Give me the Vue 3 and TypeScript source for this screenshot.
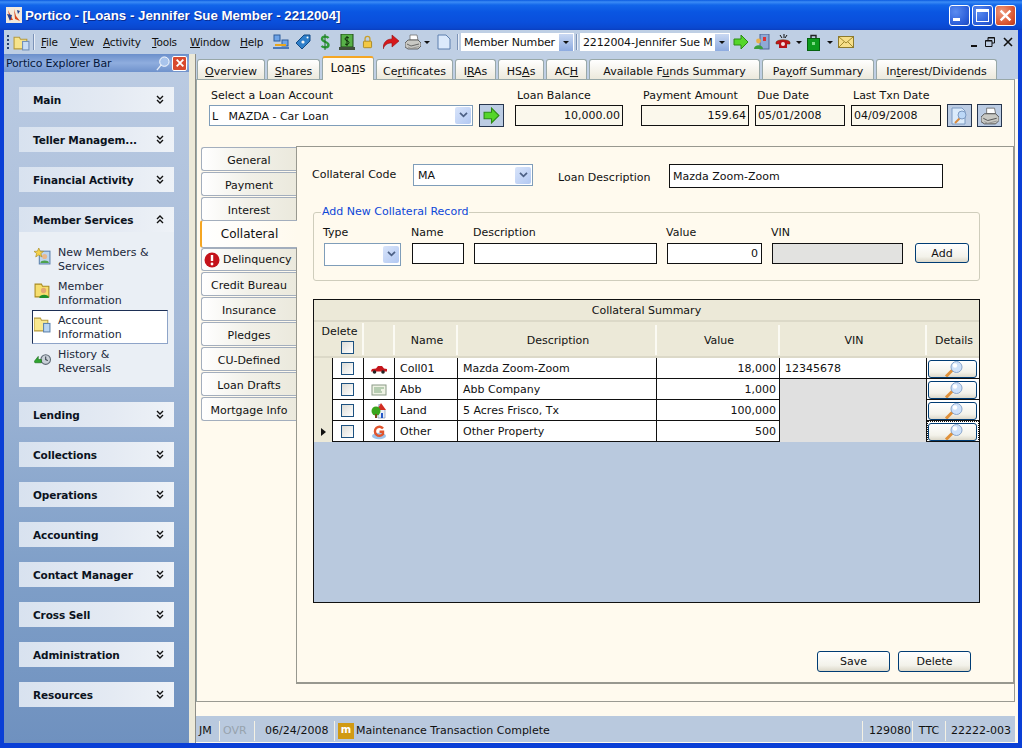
<script setup lang="ts">
type Mnemonic = { before: string; key: string; after: string };

// "&" marks the underlined access key, the way the WinForms labels do
function mnemonic(label: string): Mnemonic {
  const at = label.indexOf("&");
  return { before: label.slice(0, at), key: label.charAt(at + 1), after: label.slice(at + 2) };
}

const menus = ["&File", "&View", "&Activity", "&Tools", "&Window", "&Help"].map(mnemonic);

const topTabs = [
  { label: "&Overview", width: 68 },
  { label: "&Shares", width: 53 },
  { label: "Loa&ns", width: 52, active: true },
  { label: "Ce&rtificates", width: 77 },
  { label: "I&RAs", width: 41 },
  { label: "HS&As", width: 46 },
  { label: "AC&H", width: 41 },
  { label: "Available F&unds Summary", width: 171 },
  { label: "Pa&yoff Summary", width: 112 },
  { label: "In&terest/Dividends", width: 121 },
].map((t) => ({ ...t, text: mnemonic(t.label) }));

const sideTabs = [
  { label: "General" },
  { label: "Payment" },
  { label: "Interest" },
  { label: "Collateral", active: true },
  { label: "Delinquency", alert: true },
  { label: "Credit Bureau" },
  { label: "Insurance" },
  { label: "Pledges" },
  { label: "CU-Defined" },
  { label: "Loan Drafts" },
  { label: "Mortgage Info" },
];

const groupsBefore = ["Main", "Teller Managem...", "Financial Activity"];
const groupsAfter = ["Lending", "Collections", "Operations", "Accounting", "Contact Manager", "Cross Sell", "Administration", "Resources"];

const memberItems = [
  { icon: "#i-new", lines: ["New Members &", "Services"] },
  { icon: "#i-member", lines: ["Member", "Information"] },
  { icon: "#i-account", lines: ["Account", "Information"], active: true },
  { icon: "#i-history", lines: ["History &", "Reversals"] },
];

const rows = [
  { icon: "#i-car", name: "Coll01", description: "Mazda Zoom-Zoom", value: "18,000", vin: "12345678" },
  { icon: "#i-cert", name: "Abb", description: "Abb Company", value: "1,000", vin: "" },
  { icon: "#i-land", name: "Land", description: "5 Acres Frisco, Tx", value: "100,000", vin: "" },
  { icon: "#i-other", name: "Other", description: "Other Property", value: "500", vin: "", current: true },
];
</script>

<template>
  <div class="window">
    <svg class="defs" width="0" height="0">
      <defs>
        <symbol id="i-lens" viewBox="0 0 24 16">
          <path d="M5 15.500l7-7" stroke="#e0913a" stroke-width="3" />
          <circle cx="15.500" cy="6" r="5.500" fill="#cfe2fa" stroke="#8aa6cc" />
          <circle cx="14" cy="4.500" r="2.200" fill="#fff" />
        </symbol>
        <symbol id="i-go" viewBox="0 0 16 16">
          <path d="M1 5h7V1l7 7-7 7v-4H1z" fill="#55d62a" stroke="#2c8a14" />
        </symbol>
        <symbol id="i-folder" viewBox="0 0 16 16">
          <path d="M1 3h5l1 2h6v9H1z" fill="#f6e38c" stroke="#b79b3c" />
          <rect x="9" y="7" width="6" height="8" fill="#c7dcf5" stroke="#6f8fb8" />
        </symbol>
        <symbol id="i-new" viewBox="0 0 16 16">
          <rect x="5" y="3" width="10" height="12" fill="#bcd5ee" stroke="#5d83ad" />
          <circle cx="10" cy="8" r="2.400" fill="#e9b78c" />
          <path d="M6 14c0-3 8-3 8 0z" fill="#4da24d" />
          <path d="M4.500 0l1.300 3 3.200.2-2.500 2 .9 3.200-2.900-1.800L1.600 8.400l.9-3.200L0 3.200 3.200 3z" fill="#f5d24a" stroke="#a98a1d" stroke-width=".6" />
        </symbol>
        <symbol id="i-member" viewBox="0 0 16 16">
          <path d="M1 2h6l1 2h6v10H1z" fill="#f6de6e" stroke="#a98a1d" />
          <circle cx="9" cy="8" r="2.500" fill="#e3a772" />
          <path d="M5 15c0-4 9-4 9 0z" fill="#1f8f2a" />
        </symbol>
        <symbol id="i-account" viewBox="0 0 16 16">
          <path d="M0 2h6l1 2h6v10H0z" fill="#f9e88f" stroke="#b79b3c" />
          <rect x="9" y="7" width="6" height="8" fill="#b9d5f2" stroke="#5d83ad" />
        </symbol>
        <symbol id="i-history" viewBox="0 0 16 16">
          <circle cx="11" cy="9" r="4.500" fill="#c9d0d8" stroke="#5f6a75" />
          <path d="M11 6v3l2 1" stroke="#39424c" fill="none" />
          <path d="M0 11l4-5v3h3v3H1z" fill="#2fa52f" stroke="#1a6e1a" stroke-width=".6" />
        </symbol>
        <symbol id="i-car" viewBox="0 0 16 16">
          <path d="M0 10l1-2 4-.5L7 5h4l2 2.500 3 .5v2.500H0z" fill="#c4161c" />
          <circle cx="3.500" cy="11" r="1.800" fill="#222" />
          <circle cx="12" cy="11" r="1.800" fill="#222" />
        </symbol>
        <symbol id="i-cert" viewBox="0 0 16 16">
          <rect x="1" y="3" width="14" height="10" fill="#eef2e4" stroke="#8a9a86" />
          <path d="M3 6h10M3 8h7M3 10h8" stroke="#7fa77f" />
        </symbol>
        <symbol id="i-land" viewBox="0 0 16 16">
          <path d="M8 1l6 6v8H7V7z" fill="#e8eef8" stroke="#7f93b3" stroke-width=".7" />
          <path d="M10 0l5 7H6z" fill="#d22d22" />
          <rect x="10" y="10" width="2" height="5" fill="#2458c8" />
          <circle cx="5" cy="8" r="4.500" fill="#39a51c" />
          <rect x="4" y="11" width="2" height="4" fill="#7a4a1e" />
        </symbol>
        <symbol id="i-other" viewBox="0 0 16 16">
          <ellipse cx="8" cy="12" rx="7" ry="3.200" fill="#9cc3ea" />
          <path d="M12 4.500A4.500 4.500 0 1 0 12 10V7.800H8.500" fill="none" stroke="#e0552e" stroke-width="2.400" />
        </symbol>
        <symbol id="i-doc" viewBox="0 0 16 16">
          <path d="M2 1h8l4 4v10H2z" fill="#dbe9fb" stroke="#5d7fae" />
        </symbol>
        <symbol id="i-print" viewBox="0 0 16 16">
          <path d="M5 1h7l1 5H5z" fill="#fff" stroke="#6f6f6f" stroke-width=".8" />
          <path d="M0 9l3-3h10l3 3v3l-3 3H3l-3-2z" fill="#c9c9c4" stroke="#4c4c4c" stroke-width=".8" />
          <path d="M2 10l4 2 8-2" stroke="#4c4c4c" stroke-width=".8" fill="none" />
          <path d="M3 13l3 1.500 8-2" stroke="#8d8d8d" stroke-width=".8" fill="none" />
        </symbol>
        <symbol id="i-lock" viewBox="0 0 16 16">
          <path d="M5 7V4a3 3 0 0 1 6 0v3" fill="none" stroke="#c9a02c" stroke-width="1.600" />
          <rect x="3" y="7" width="10" height="8" rx="1" fill="#f3c844" stroke="#a27f14" />
        </symbol>
      </defs>
    </svg>

    <header class="titlebar">
      <svg class="app-logo" viewBox="0 0 16 16">
        <rect width="16" height="16" fill="#f2e9dc" />
        <path d="M2 3l5 10H4zM8 2l2 7 4 5-5-2z" fill="#d8461c" />
        <path d="M1 7l5 1-2 6zM11 3l3 1-2 3z" fill="#23408e" />
      </svg>
      <span class="title-text">Portico - [Loans - Jennifer Sue Member - 2212004]</span>
      <div class="caption-buttons">
        <button class="cap cap-blue"><i class="glyph-min"></i></button>
        <button class="cap cap-blue"><i class="glyph-max"></i></button>
        <button class="cap cap-red">
          <svg viewBox="0 0 12 12" width="13" height="13"><path d="M1.500 1.500l9 9m0-9l-9 9" stroke="#fff" stroke-width="2.200" /></svg>
        </button>
      </div>
    </header>

    <div class="toolbar">
      <span class="grip"></span>
      <svg class="tool tool-first"><use href="#i-folder" /></svg>
      <span class="sep"></span>
      <nav class="menus">
        <span v-for="m in menus" :key="m.key" class="menu">{{ m.before }}<u>{{ m.key }}</u>{{ m.after }}</span>
      </nav>
      <div class="tools">
        <svg class="tool" viewBox="0 0 16 16">
          <rect x="1" y="1" width="6" height="6" fill="#6ea4e8" stroke="#2d5c9c" /><rect x="9" y="6" width="6" height="6" fill="#6ea4e8" stroke="#2d5c9c" />
          <path d="M2 11h11" stroke="#e8a51c" stroke-width="2" /><rect y="13" width="16" height="2" fill="#4a78b8" />
        </svg>
        <svg class="tool" viewBox="0 0 16 16">
          <path d="M1 9l8-8h6v6l-8 8z" fill="#2f7fc9" stroke="#124a85" /><circle cx="8" cy="8" r="1.600" fill="#f4f4f4" /><circle cx="12.500" cy="3.500" r="1" fill="#fff" />
        </svg>
        <svg class="tool" viewBox="0 0 16 16">
          <path d="M11.500 4C10 2 5 2 5 5c0 3 6.500 2.500 6.500 6 0 3-5 3-7 1" fill="none" stroke="#2f9a36" stroke-width="2.400" /><path d="M8 0v16" stroke="#1c6a24" />
        </svg>
        <svg class="tool" viewBox="0 0 16 16">
          <rect x="2" y="0" width="12" height="13" fill="#58b148" stroke="#1d4a14" /><rect y="13" width="16" height="3" fill="#40503c" />
          <path d="M10 4C9 3 6 3 6 5s4 1.500 4 3.500S7 11 6 10M8 2v10" fill="none" stroke="#0d2c08" />
        </svg>
        <svg class="tool tool-narrow"><use href="#i-lock" /></svg>
        <svg class="tool tool-redo" viewBox="0 0 16 16">
          <path d="M0 15C0 8 4 5 9 5V1l7 6-7 6V9c-4 0-7 1-9 6z" fill="#d7181c" stroke="#8f1012" stroke-width=".6" />
        </svg>
        <svg class="tool"><use href="#i-print" /></svg>
        <i class="drop drop-tight"></i>
        <svg class="tool tool-doc"><use href="#i-doc" /></svg>
      </div>
      <span class="sep"></span>
      <div class="tool-combo combo-a"><span>Member Number</span><b class="combo-btn"><i class="drop"></i></b></div>
      <span class="sep"></span>
      <div class="tool-combo combo-b"><span>2212004-Jennifer Sue M</span><b class="combo-btn"><i class="drop"></i></b></div>
      <div class="tools tools-right">
        <svg class="tool"><use href="#i-go" /></svg>
        <svg class="tool" viewBox="0 0 16 16">
          <rect x="6" y="0" width="9" height="15" fill="#8fa9d6" stroke="#4f6796" /><path d="M9 3h3v4H9z" fill="#d33" />
          <circle cx="4.500" cy="7" r="2.400" fill="#e8b04a" /><path d="M0 15c0-5 9-5 9 0z" fill="#3b9f3b" />
        </svg>
        <svg class="tool" viewBox="0 0 16 16">
          <path d="M1 8c2-3 12-3 14 0v2H1z" fill="#c8141a" stroke="#530" stroke-width=".5" /><rect x="4" y="7" width="8" height="7" fill="#b81218" />
          <circle cx="8" cy="10" r="2" fill="#f2e2e2" /><path d="M5 1l2 3m2-4v4m3-3l-2 3" stroke="#111" />
        </svg>
        <i class="drop"></i>
        <svg class="tool-bag" viewBox="0 0 13 17">
          <path d="M4 5V1.500h5V5" fill="none" stroke="#222" stroke-width="1.400" /><rect x=".5" y="4.500" width="12" height="12" fill="#0d9b1e" stroke="#05620f" />
          <rect x="5" y="8" width="3" height="3" fill="#7ddc86" />
        </svg>
        <i class="drop drop-wide"></i>
        <svg class="tool-env" viewBox="0 0 16 12">
          <rect x=".5" y=".5" width="15" height="11" fill="#f6df8a" stroke="#8d7a2c" /><path d="M1 1l7 6 7-6M1 11l5-5m9 5l-5-5" stroke="#a18a2f" fill="none" />
        </svg>
      </div>
      <div class="mdi">
        <i class="mdi-min"></i>
        <svg viewBox="0 0 10 10" width="10" height="10"><path d="M3 3V.5h6.500V6H7M.5 3.500H7V9.500H.5z" fill="none" stroke="#111" /><path d="M3 1h6.500M.5 4H7" stroke="#111" /></svg>
        <svg viewBox="0 0 10 10" width="10" height="10"><path d="M1 1l8 8m0-8l-8 8" stroke="#111" stroke-width="1.600" /></svg>
      </div>
    </div>

    <div class="main">
      <aside class="explorer">
        <div class="explorer-head">
          <span>Portico Explorer Bar</span>
          <svg class="pin" viewBox="0 0 16 16"><path d="M2 15l5-6" stroke="#e8eef8" stroke-width="1.400" /><circle cx="10" cy="6" r="5" fill="#a9c4ec" stroke="#fff" /></svg>
          <span class="explorer-close"><svg viewBox="0 0 12 12" width="10" height="10"><path d="M2 2l8 8m0-8l-8 8" stroke="#fff" stroke-width="2.200" /></svg></span>
        </div>
        <div class="groups">
          <div v-for="g in groupsBefore" :key="g" class="group-head">
            <span>{{ g }}</span>
            <svg class="chev" viewBox="0 0 8 9"><path d="M1 1l3 3 3-3M1 5l3 3 3-3" fill="none" stroke="#111" stroke-width="1.400" /></svg>
          </div>
          <section class="group-open">
            <div class="group-head">
              <span>Member Services</span>
              <svg class="chev" viewBox="0 0 8 9"><path d="M1 4l3-3 3 3M1 8l3-3 3 3" fill="none" stroke="#111" stroke-width="1.400" /></svg>
            </div>
            <div class="group-body">
              <div v-for="item in memberItems" :key="item.icon" class="group-item" :class="{ 'group-item--active': item.active }">
                <svg class="item-icon"><use :href="item.icon" /></svg>
                <div class="item-text"><div v-for="l in item.lines" :key="l">{{ l }}</div></div>
              </div>
            </div>
          </section>
          <div v-for="g in groupsAfter" :key="g" class="group-head">
            <span>{{ g }}</span>
            <svg class="chev" viewBox="0 0 8 9"><path d="M1 1l3 3 3-3M1 5l3 3 3-3" fill="none" stroke="#111" stroke-width="1.400" /></svg>
          </div>
        </div>
      </aside>

      <div class="splitter"></div>

      <main class="content">
        <div class="top-tabs">
          <div
            v-for="t in topTabs"
            :key="t.label"
            class="top-tab"
            :class="{ 'top-tab--active': t.active }"
            :style="{ width: t.width + 'px' }"
          >{{ t.text.before }}<u>{{ t.text.key }}</u>{{ t.text.after }}</div>
        </div>

        <div class="panel">
          <div class="account-row">
            <div class="fld fld-account">
              <label>Select a Loan Account</label>
              <div class="select select-account"><span>L &nbsp;&nbsp;MAZDA - Car Loan</span><b class="arrow"><svg viewBox="0 0 10 8" width="9" height="7"><path d="M1 1l4 4 4-4" fill="none" stroke="#4d6185" stroke-width="2" /></svg></b></div>
            </div>
            <button class="square-btn go-btn"><svg width="17" height="17"><use href="#i-go" /></svg></button>
            <div class="fld fld-balance">
              <label>Loan Balance</label>
              <div class="readout right">10,000.00</div>
            </div>
            <div class="fld fld-payment">
              <label>Payment Amount</label>
              <div class="readout right">159.64</div>
            </div>
            <div class="fld fld-date">
              <label>Due Date</label>
              <div class="readout">05/01/2008</div>
            </div>
            <div class="fld fld-date">
              <label>Last Txn Date</label>
              <div class="readout">04/09/2008</div>
            </div>
            <button class="square-btn"><svg width="20" height="18" viewBox="0 0 20 18"><path d="M2 1h10l3 3v13H2z" fill="#dcebfa" stroke="#7d9ac2" /><path d="M5 16l5-5" stroke="#d98a3a" stroke-width="2" /><circle cx="12" cy="8" r="4" fill="#bcd8f7" stroke="#7d9ac2" /></svg></button>
            <button class="square-btn"><svg width="18" height="18"><use href="#i-print" /></svg></button>
          </div>

          <div class="detail">
            <div class="side-tabs">
              <div
                v-for="t in sideTabs"
                :key="t.label"
                class="side-tab"
                :class="{ 'side-tab--active': t.active, 'side-tab--alert': t.alert }"
              >
                <svg v-if="t.alert" class="alert-icon" viewBox="0 0 16 16"><circle cx="8" cy="8" r="7.500" fill="#c4121a" /><path d="M8 3v6" stroke="#fff" stroke-width="2.400" /><circle cx="8" cy="12" r="1.400" fill="#fff" /></svg>
                {{ t.label }}
              </div>
            </div>

            <div class="sheet">
              <div class="code-row">
                <label class="code-label">Collateral Code</label>
                <div class="select select-code"><span>MA</span><b class="arrow"><svg viewBox="0 0 10 8" width="9" height="7"><path d="M1 1l4 4 4-4" fill="none" stroke="#4d6185" stroke-width="2" /></svg></b></div>
                <label class="desc-label">Loan Description</label>
                <div class="input input-desc">Mazda Zoom-Zoom</div>
              </div>

              <fieldset class="add-box">
                <legend>Add New Collateral Record</legend>
                <div class="add-grid">
                  <label>Type</label>
                  <label>Name</label>
                  <label>Description</label>
                  <label>Value</label>
                  <label>VIN</label>
                  <span></span>
                  <div class="select select-type"><span></span><b class="arrow"><svg viewBox="0 0 10 8" width="9" height="7"><path d="M1 1l4 4 4-4" fill="none" stroke="#4d6185" stroke-width="2" /></svg></b></div>
                  <div class="input"></div>
                  <div class="input"></div>
                  <div class="input right">0</div>
                  <div class="input input-off"></div>
                  <button class="xp-btn add-btn">Add</button>
                </div>
              </fieldset>

              <div class="summary">
                <div class="summary-caption">Collateral Summary</div>
                <div class="summary-row summary-head">
                  <div class="hc hc-delete">Delete<i class="check"></i></div>
                  <div class="hc"></div>
                  <div class="hc">Name</div>
                  <div class="hc">Description</div>
                  <div class="hc">Value</div>
                  <div class="hc">VIN</div>
                  <div class="hc hc-details">Details</div>
                </div>
                <div v-for="r in rows" :key="r.name" class="summary-row data-row">
                  <div class="c c-mark"><i v-if="r.current" class="mark"></i></div>
                  <div class="c c-center"><i class="check"></i></div>
                  <div class="c c-center"><svg class="row-icon"><use :href="r.icon" /></svg></div>
                  <div class="c">{{ r.name }}</div>
                  <div class="c">{{ r.description }}</div>
                  <div class="c right c-value">{{ r.value }}</div>
                  <div class="c" :class="{ 'c-off': !r.vin }">{{ r.vin }}</div>
                  <div class="c c-details" :class="{ 'c-focus': r.current }">
                    <button class="xp-btn lens-btn"><svg width="24" height="16"><use href="#i-lens" /></svg></button>
                  </div>
                </div>
              </div>

              <div class="actions">
                <button class="xp-btn action-btn">Save</button>
                <button class="xp-btn action-btn">Delete</button>
              </div>
            </div>
          </div>
        </div>

        <footer class="status">
          <span class="st st-user">JM</span>
          <span class="st st-ovr">OVR</span>
          <span class="st st-date">06/24/2008</span>
          <span class="st st-msg"><b class="m-badge">m</b>Maintenance Transaction Complete</span>
          <span class="st st-num">129080</span>
          <span class="st st-code">TTC</span>
          <span class="st st-acct">22222-003</span>
        </footer>
      </main>
    </div>
  </div>
</template>

<style>
html,
body {
  margin: 0;
  overflow: hidden;
}
</style>

<style scoped>
.window {
  width: 1022px;
  height: 748px;
  display: flex;
  flex-direction: column;
  box-sizing: border-box;
  padding: 0 4px 5px 4px;
  background: #0a3fd6;
  font-family: "DejaVu Sans", sans-serif;
  font-size: 11px;
  color: #111;
  overflow: hidden;
}

.defs {
  position: absolute;
}

.titlebar {
  height: 30px;
  margin: 0 -4px;
  padding: 0 6px 0 6px;
  display: flex;
  align-items: center;
  flex: none;
  background: linear-gradient(180deg, #0a5ae0 0, #3b8cf5 2px, #1266ea 5px, #0a56e2 12px, #0a4fdc 22px, #0a48cf 28px, #0a3fc0 30px);
}

.app-logo {
  width: 16px;
  height: 16px;
  margin-right: 3px;
}

.title-text {
  font-family: "Liberation Sans", sans-serif;
  font-weight: 700;
  font-size: 13.3px;
  color: #fff;
  text-shadow: 1px 1px 0 #0a2c90;
}

.caption-buttons {
  margin-left: auto;
  display: flex;
  gap: 2px;
}

.cap {
  width: 21px;
  height: 21px;
  padding: 0;
  border: 1px solid #fff;
  border-radius: 3px;
  display: flex;
  align-items: center;
  justify-content: center;
}

.cap-blue {
  background: radial-gradient(circle at 30% 30%, #5b8cf0, #2a5cd8 70%, #1f49b8);
}

.cap-red {
  background: radial-gradient(circle at 30% 30%, #ef9a7c, #d8512c 70%, #b53a1b);
}

.glyph-min {
  width: 7px;
  height: 3px;
  background: #fff;
  margin: 9px 7px 0 0;
}

.glyph-max {
  width: 11px;
  height: 9px;
  border: 1px solid #fff;
  border-top-width: 3px;
}

.toolbar {
  height: 24px;
  flex: none;
  display: flex;
  align-items: center;
  background: #bfcfe4;
  padding-left: 3px;
}

.grip {
  width: 2px;
  height: 15px;
  margin-right: 4px;
  background: repeating-linear-gradient(180deg, #27406e 0 2px, transparent 2px 4px);
}

.tool {
  width: 16px;
  height: 16px;
  flex: none;
}

.tool-first {
  width: 17px;
  height: 17px;
  margin-right: 3px;
}

.tool-narrow {
  width: 13px;
}

.tool-redo {
  margin-left: 3px;
}

.tool-doc {
  height: 18px;
}

.sep {
  width: 1px;
  height: 16px;
  background: #7c93b7;
  box-shadow: 1px 0 0 #e8eef7;
  flex: none;
}

.menus {
  display: grid;
  grid-template-columns: 29px 33px 49px 38px 50px 1fr;
  margin-left: 7px;
  width: 232px;
  flex: none;
}

.menu {
  font-size: 10.5px;
  letter-spacing: -0.2px;
  white-space: nowrap;
}

.tools {
  display: flex;
  align-items: center;
  gap: 6px;
  width: 184px;
  flex: none;
}

.tools-right {
  width: 127px;
  margin-left: 3px;
  gap: 5px;
}

.tool-bag {
  width: 13px;
  height: 17px;
  flex: none;
}

.tool-env {
  width: 16px;
  height: 12px;
  flex: none;
}

.drop {
  display: inline-block;
  width: 0;
  height: 0;
  border: 3px solid transparent;
  border-top: 3px solid #111;
  border-bottom: 0;
  flex: none;
}

.drop-tight {
  margin-left: -3px;
}

.drop-wide {
  margin-left: 2px;
}

.tool-combo {
  height: 18px;
  margin-left: 3px;
  background: #fff;
  display: flex;
  align-items: center;
  padding-left: 3px;
  box-sizing: border-box;
  flex: none;
  white-space: nowrap;
  letter-spacing: -0.15px;
}

.combo-a {
  width: 113px;
  margin-right: 2px;
}

.combo-b {
  width: 150px;
}

.tool-combo span {
  flex: 1;
  overflow: hidden;
}

.combo-btn {
  width: 14px;
  height: 17px;
  background: linear-gradient(180deg, #c9d8f2, #8eabe0);
  display: flex;
  align-items: center;
  justify-content: center;
  margin-right: 1px;
}

.mdi {
  margin-left: auto;
  display: flex;
  align-items: center;
  gap: 8px;
  padding-right: 5px;
}

.mdi-min {
  width: 6px;
  height: 2px;
  background: #111;
  margin-top: 8px;
}

.main {
  flex: 1;
  display: flex;
  min-height: 0;
}

.explorer {
  width: 185px;
  flex: none;
  display: flex;
  flex-direction: column;
  background: linear-gradient(180deg, #bccce3 0, #a5bad8 40%, #7f9fc8 75%, #6f91bf 100%);
}

.explorer-head {
  height: 18px;
  flex: none;
  display: flex;
  align-items: center;
  padding-left: 2px;
  background: linear-gradient(180deg, #6b8fcb, #8fadde 50%, #6f92cc);
  color: #06183c;
  letter-spacing: -0.2px;
}

.pin {
  width: 15px;
  height: 15px;
  margin-left: auto;
}

.explorer-close {
  width: 13px;
  height: 13px;
  margin: 0 2px 0 2px;
  border: 1px solid #fff;
  border-radius: 2px;
  background: #d8492e;
  display: flex;
  align-items: center;
  justify-content: center;
}

.groups {
  padding: 15px 15px 0;
  display: flex;
  flex-direction: column;
  gap: 15px;
}

.group-head {
  height: 25px;
  box-sizing: border-box;
  padding: 0 10px 0 14px;
  display: flex;
  align-items: center;
  justify-content: space-between;
  background: linear-gradient(90deg, #d8e2ef, #e4eaf3 60%, #eef2f7);
  font-weight: 700;
  font-size: 10.5px;
  letter-spacing: -0.1px;
  color: #0b1220;
  white-space: nowrap;
}

.chev {
  width: 8px;
  height: 9px;
}

.group-open {
  background: #eaeff5;
}

.group-body {
  height: 155px;
  box-sizing: border-box;
  padding: 10px 6px 0 13px;
}

.group-item {
  height: 34px;
  box-sizing: border-box;
  display: flex;
  align-items: center;
  line-height: 14px;
  padding-left: 1px;
  border: 1px solid transparent;
}

.group-item--active {
  background: #fff;
  border-color: #1d2f55 #8ea4c8 #8ea4c8 #1d2f55;
}

.item-icon {
  width: 17px;
  height: 17px;
  margin: -6px 7px 0 0;
  flex: none;
}

.item-text {
  white-space: nowrap;
  color: #20283a;
  padding-top: 2px;
}

.splitter {
  width: 7px;
  flex: none;
  background: #ece9d8;
  border-right: 1px solid #8d8d86;
  box-sizing: border-box;
}

.content {
  flex: 1;
  min-width: 0;
  display: flex;
  flex-direction: column;
  background: #fffaee;
}

.top-tabs {
  height: 25px;
  flex: none;
  display: flex;
  align-items: flex-end;
  gap: 2px;
  padding-left: 1px;
  background: #bfcfe4;
  position: relative;
  z-index: 1;
}

.top-tab {
  height: 20px;
  box-sizing: border-box;
  border: 1px solid #98a8a8;
  border-bottom: 0;
  border-radius: 3px 3px 0 0;
  background: linear-gradient(180deg, #fff, #ece9dc);
  text-align: center;
  line-height: 24px;
  white-space: nowrap;
  flex: none;
}

.top-tab--active {
  height: 24px;
  margin-bottom: -1px;
  background: #fffaee;
  border-top: 2px solid #f5a623;
  border-color: #f5a623 #98a8a8 transparent;
  line-height: 20px;
  font-size: 12px;
}

.panel {
  height: 623px;
  flex: none;
  box-sizing: border-box;
  border: 1px solid #9a9a92;
  border-top-color: #98a8a8;
  border-left-color: #98a8a8;
  margin-right: 3px;
  display: flex;
  flex-direction: column;
}

.account-row {
  height: 66px;
  flex: none;
  box-sizing: border-box;
  padding: 9px 0 0 12px;
  display: flex;
  align-items: flex-start;
}

.fld label {
  display: block;
  height: 16px;
  padding-left: 2px;
  line-height: 14px;
  white-space: nowrap;
}

.fld-account {
  width: 264px;
}

.fld-balance {
  width: 108px;
  margin-left: 11px;
}

.fld-payment {
  width: 108px;
  margin-left: 18px;
}

.fld-date {
  width: 90px;
  margin-left: 6px;
}

.readout {
  height: 21px;
  box-sizing: border-box;
  border: 1px solid #111;
  background: #fbf8ec;
  line-height: 19px;
  padding: 0 2px;
  white-space: nowrap;
}

.right {
  text-align: right;
}

.square-btn {
  width: 25px;
  height: 23px;
  margin: 15px 0 0 6px;
  padding: 0;
  border: 1px solid #27364f;
  background: #bccce3;
  display: flex;
  align-items: center;
  justify-content: center;
  flex: none;
}

.square-btn + .square-btn {
  margin-left: 5px;
}

.select {
  display: flex;
  align-items: center;
  box-sizing: border-box;
  border: 1px solid #7f9db9;
  background: #fff;
  padding-left: 2px;
  white-space: nowrap;
}

.select span {
  flex: 1;
  padding-top: 1px;
}

.select-account {
  height: 21px;
}

.select-code {
  width: 120px;
  height: 22px;
  padding-left: 4px;
}

.select-type {
  height: 23px;
  margin-right: 1px;
}

.arrow {
  width: 16px;
  height: 17px;
  margin-right: 1px;
  border-radius: 2px;
  background: linear-gradient(135deg, #d8e4fa, #b2c8f2);
  display: flex;
  align-items: center;
  justify-content: center;
  flex: none;
}

.detail {
  flex: 1;
  min-height: 0;
  display: flex;
  padding-left: 4px;
}

.side-tabs {
  width: 95px;
  flex: none;
  padding-top: 1px;
  display: flex;
  flex-direction: column;
  gap: 1px;
  position: relative;
  z-index: 1;
}

.side-tab {
  height: 24px;
  flex: none;
  box-sizing: border-box;
  border: 1px solid #a3aebd;
  border-right: 0;
  border-radius: 3px 0 0 3px;
  padding-top: 2px;
  background: linear-gradient(90deg, #fff, #f1f0e8 50%, #ebe9dd);
  display: flex;
  align-items: center;
  justify-content: center;
  white-space: nowrap;
}

.side-tab--active {
  height: 28px;
  margin: -2px -1px -1px -1px;
  width: 97px;
  border-left: 2px solid #f5a623;
  font-size: 12px;
  background: linear-gradient(90deg, #fff, #fffaee);
  padding-top: 0;
}

.side-tab--alert {
  height: 23px;
  gap: 3px;
  justify-content: flex-start;
  padding-left: 2px;
  padding-top: 0;
}

.alert-icon {
  width: 16px;
  height: 16px;
  flex: none;
}

.sheet {
  flex: 1;
  min-width: 0;
  box-sizing: border-box;
  border: 1px solid #98988f;
  border-bottom-width: 2px;
  height: 538px;
  padding: 17px 0 0 16px;
  display: flex;
  flex-direction: column;
}

.code-row {
  height: 24px;
  flex: none;
  display: flex;
  align-items: flex-start;
}

.code-label {
  width: 101px;
  margin-left: -1px;
  line-height: 22px;
  white-space: nowrap;
}

.desc-label {
  width: 111px;
  margin-left: 25px;
  line-height: 27px;
  white-space: nowrap;
}

.input {
  height: 21px;
  box-sizing: border-box;
  border: 1px solid #111;
  background: #fff;
  line-height: 19px;
  padding: 0 3px;
  white-space: nowrap;
}

.input-desc {
  width: 274px;
  height: 24px;
  line-height: 24px;
}

.input-off {
  background: #e2e2e0;
}

.add-box {
  width: 667px;
  height: 76px;
  margin: 17px 0 0 0;
  padding: 0 10px;
  box-sizing: border-box;
  border: 1px solid #cfcdbc;
  border-radius: 3px;
  flex: none;
}

.add-box legend {
  padding: 0 1px;
  margin-left: -3px;
  color: #0d47d8;
  line-height: 14px;
}

.add-grid {
  display: grid;
  grid-template-columns: 78px 52px 183px 95px 131px 56px;
  grid-template-rows: 17px 21px;
  column-gap: 10px;
  margin-top: 7px;
}

.add-grid label {
  line-height: 14px;
  margin-left: -1px;
}

.add-btn {
  height: 20px;
  margin-left: 2px;
}

.summary {
  width: 667px;
  height: 304px;
  margin-top: 18px;
  box-sizing: border-box;
  border: 1px solid #111;
  background: #b9c9de;
  flex: none;
  display: flex;
  flex-direction: column;
}

.summary-caption {
  height: 22px;
  flex: none;
  background: #ece9d8;
  border-bottom: 2px solid #dcd9c8;
  text-align: center;
  line-height: 22px;
  box-sizing: border-box;
}

.summary-row {
  display: grid;
  grid-template-columns: 19px 31px 31px 63px 199px 123px 147px 52px;
  flex: none;
}

.summary-head {
  height: 36px;
  grid-template-columns: 50px 31px 63px 199px 123px 147px 52px;
  background: #ece9d8;
  border-bottom: 2px solid #dcd9c8;
  box-sizing: border-box;
}

.hc {
  border-right: 2px solid #fbfaf3;
  margin: 3px 0 1px;
  display: flex;
  flex-direction: column;
  align-items: center;
  justify-content: center;
  padding-left: 3px;
}

.hc-details {
  border-right: 0;
  padding-left: 2px;
}

.hc-delete {
  gap: 3px;
  margin-top: 1px;
}

.hc-delete .check {
  margin-left: 16px;
}

.check {
  display: block;
  width: 11px;
  height: 11px;
  border: 1px solid #1c5180;
  background: linear-gradient(135deg, #dcdcd7, #fff);
}

.c-center .check {
  margin-right: 2px;
}

.data-row {
  height: 21px;
  background: #fff;
  border-bottom: 1px solid #111;
  box-sizing: border-box;
}

.c {
  border-right: 1px solid #111;
  padding: 0 5px;
  line-height: 21px;
  white-space: nowrap;
  min-width: 0;
}

.c-value {
  padding-right: 3px;
}

.c-mark {
  background: #ece9d8;
  padding: 0;
  display: flex;
  align-items: center;
  justify-content: center;
}

.mark {
  width: 0;
  height: 0;
  border: 4px solid transparent;
  border-left: 5px solid #111;
  border-right: 0;
}

.c-center {
  padding: 0;
  display: flex;
  align-items: center;
  justify-content: center;
}

.row-icon {
  width: 16px;
  height: 16px;
}

.c-off {
  background: #e0e0e0;
}

.c-details {
  padding: 0 1px;
  border-right: 0;
  display: flex;
  align-items: center;
}

.c-focus {
  outline: 1px dotted #111;
  outline-offset: -1px;
}

.xp-btn {
  font: inherit;
  color: #111;
  padding: 0;
  border: 1px solid #003c74;
  border-radius: 3px;
  background: linear-gradient(180deg, #fff, #f3f2ea 70%, #dcd8ca);
}

.lens-btn {
  width: 49px;
  height: 18px;
  display: flex;
  align-items: center;
  justify-content: center;
}

.actions {
  margin-top: 48px;
  display: flex;
  justify-content: flex-end;
  gap: 8px;
  width: 658px;
}

.action-btn {
  width: 73px;
  height: 21px;
}

.status {
  height: 26px;
  margin: 14px 3px 0 0;
  flex: none;
  display: flex;
  align-items: center;
  background: #b9c9de;
  box-sizing: content-box;
  white-space: nowrap;
}

.st {
  height: 20px;
  margin-top: 3px;
  line-height: 20px;
  box-sizing: border-box;
  border-right: 1px solid #f4f1e4;
  padding: 0 3px;
  flex: none;
}

.st-user {
  width: 24px;
}

.st-ovr {
  width: 35px;
  color: #97a3ad;
}

.st-date {
  width: 80px;
  padding-left: 10px;
}

.st-msg {
  flex: 1;
  display: flex;
  align-items: center;
  padding-left: 3px;
}

.m-badge {
  width: 16px;
  height: 16px;
  margin-right: 2px;
  background: #d19a13;
  color: #fff;
  font-size: 10px;
  line-height: 14px;
  text-align: center;
}

.st-num {
  width: 50px;
  text-align: center;
  padding-left: 5px;
  padding-right: 0;
}

.st-code {
  width: 33px;
  text-align: center;
}

.st-acct {
  width: 69px;
  border-right: 0;
  padding-left: 5px;
}
</style>
